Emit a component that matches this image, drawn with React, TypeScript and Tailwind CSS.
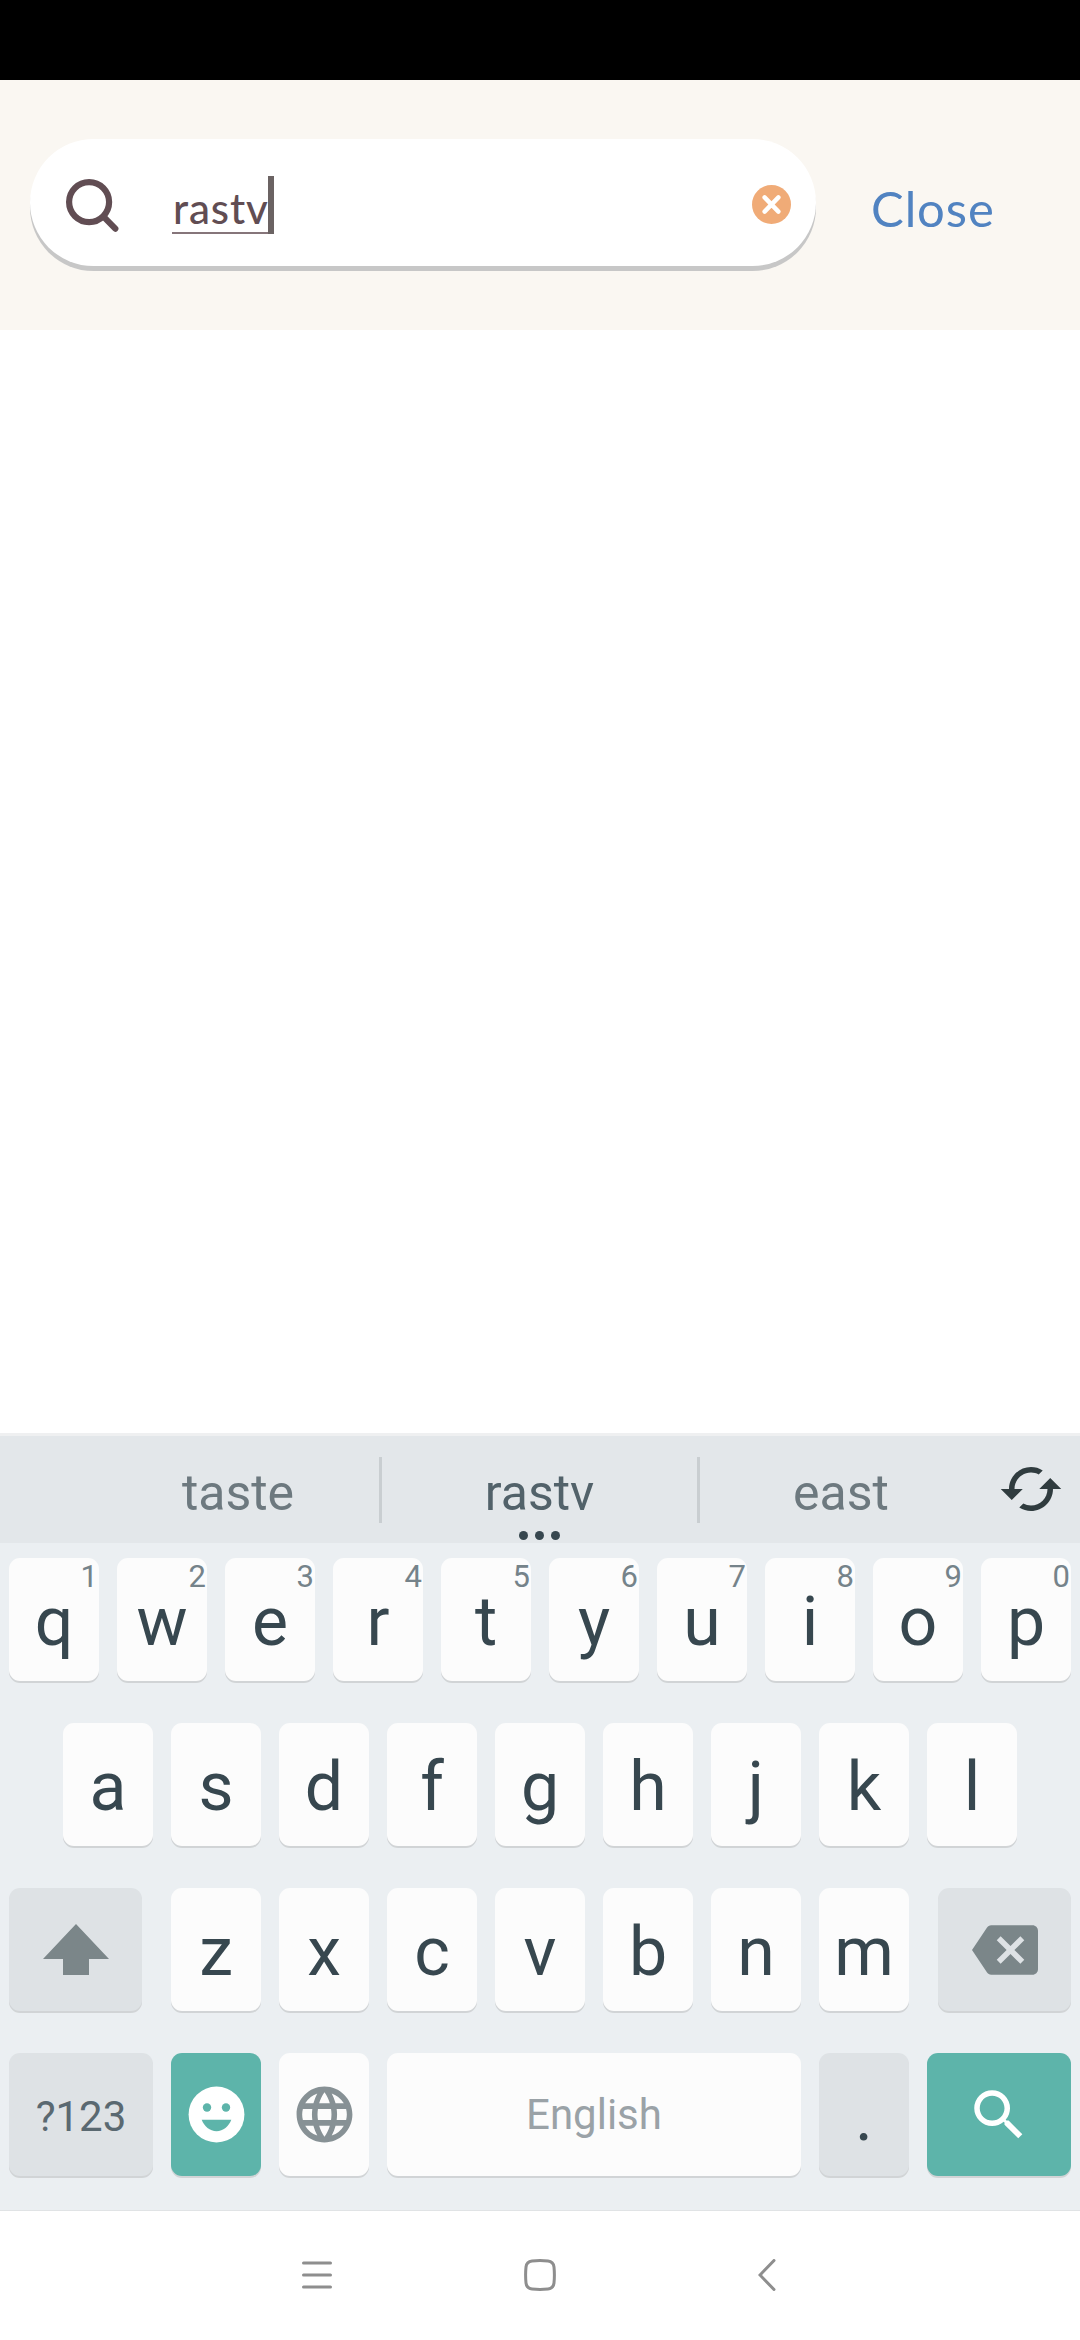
import type { ReactNode } from "react";
import { MdBackspace, MdCached, MdLanguage, MdSearch } from "react-icons/md";

const TOP_ROW = ["q", "w", "e", "r", "t", "y", "u", "i", "o", "p"];
const HOME_ROW = ["a", "s", "d", "f", "g", "h", "j", "k", "l"];
const BOTTOM_ROW = ["z", "x", "c", "v", "b", "n", "m"];

function Key({ children, className = "w-[90px] bg-[#fcfcfc]" }: { children: ReactNode; className?: string }) {
  return (
    <div
      className={`relative flex h-[123px] shrink-0 justify-center rounded-[11px] shadow-[0_2px_0_#d1d4d6] ${className}`}
    >
      {children}
    </div>
  );
}

function Letter({ children }: { children: string }) {
  return <span className="h-[123px] text-[68px] leading-[128px] text-[#37474f]">{children}</span>;
}

function SearchHeader() {
  return (
    <header className="flex h-[250px] items-start bg-[#faf7f2] pl-[30px] pt-[59px]">
      <div className="flex h-[127px] w-[786px] items-start rounded-full bg-white shadow-[0_5px_0_#c7c7c7]">
        <svg className="ml-[34px] mt-[37px] h-[60px] w-[60px] shrink-0" viewBox="0 0 60 60" fill="none" stroke="#614d53">
          <circle cx="25.1" cy="26.1" r="20" strokeWidth="6.2" />
          <path d="M40 41.2 51.3 52.7" strokeWidth="6.2" strokeLinecap="round" />
        </svg>
        <div className="ml-[48px] mt-[37px] flex h-[58px] items-end">
          <span className="h-[58px] w-[96px] whitespace-nowrap border-b-2 border-[#86757a] pl-[1px] font-['Lato',sans-serif] text-[42px] font-medium leading-[65px] tracking-[0.9px] text-[#614d53]">
            rastv
          </span>
          <span className="h-[58px] w-[6px] shrink-0 bg-[#6b6363]" />
        </div>
        <svg className="ml-auto mr-[25px] mt-[46px] h-[39px] w-[39px] shrink-0" viewBox="0 0 39 39">
          <circle cx="19.5" cy="19.5" r="19.5" fill="#f0ab77" />
          <path d="m12.6 12.4 13.8 14.2m0-14.2L12.6 26.6" stroke="#fff" strokeWidth="4.4" strokeLinecap="round" />
        </svg>
      </div>
      <span className="ml-[55px] mt-[34px] font-['Lato',sans-serif] text-[49px] leading-[70px] tracking-[0.9px] text-[#5183c1]">
        Close
      </span>
    </header>
  );
}

function SuggestionBar() {
  return (
    <div className="flex h-[110px] items-start border-t-[3px] border-[#eff0f1] bg-[#e3e7ea] pl-[97px] text-center text-[50px] leading-[114px] text-[#6d797f]">
      <span className="h-[107px] w-[282px]">taste</span>
      <span className="mt-[21px] h-[66px] w-[3px] bg-[#c9ced1]" />
      <span className="relative h-[107px] w-[315px] text-[#52626a]">
        rastv
        <span className="absolute bottom-[3px] left-[137px] flex gap-[7px]">
          <i className="h-[9px] w-[9px] rounded-full bg-[#37474f]" />
          <i className="h-[9px] w-[9px] rounded-full bg-[#37474f]" />
          <i className="h-[9px] w-[9px] rounded-full bg-[#37474f]" />
        </span>
      </span>
      <span className="mt-[21px] h-[66px] w-[3px] bg-[#c9ced1]" />
      <span className="h-[107px] w-[282px]">east</span>
      <MdCached className="ml-[16px] mt-[20px] h-[66px] w-[66px] text-[#303c3f]" />
    </div>
  );
}

function Keyboard() {
  return (
    <section className="h-[777px] bg-[#ebeff2] font-['Roboto',sans-serif]">
      <SuggestionBar />
      <div className="flex flex-col gap-[42px] px-[9px] pt-[15px]">
        <div className="flex gap-[18px]">
          {TOP_ROW.map((letter, i) => (
            <Key key={letter}>
              <Letter>{letter}</Letter>
              <span className="absolute right-[1px] top-0 text-[31px] leading-[37px] text-[#75838a]">{(i + 1) % 10}</span>
            </Key>
          ))}
        </div>
        <div className="flex justify-center gap-[18px]">
          {HOME_ROW.map((letter) => (
            <Key key={letter}>
              <Letter>{letter}</Letter>
            </Key>
          ))}
        </div>
        <div className="flex justify-between">
          <Key className="w-[133px] items-center bg-[#dee2e5]">
            <svg className="h-[51px] w-[66px]" viewBox="0 0 66 51" fill="#7b8689">
              <path d="M33 0 66 35H46V51H20V35H0Z" />
            </svg>
          </Key>
          <div className="flex gap-[18px]">
            {BOTTOM_ROW.map((letter) => (
              <Key key={letter}>
                <Letter>{letter}</Letter>
              </Key>
            ))}
          </div>
          <Key className="w-[133px] items-center bg-[#dee2e5]">
            <MdBackspace className="h-[66px] w-[66px] text-[#7b8689]" />
          </Key>
        </div>
        <div className="flex gap-[18px]">
          <Key className="w-[144px] bg-[#dee2e5]">
            <span className="h-[123px] text-[42px] leading-[127px] text-[#5a6971]">?123</span>
          </Key>
          <Key className="w-[90px] items-center bg-[#5db4aa]">
            <svg className="h-[67px] w-[67px]" viewBox="0 0 24 24">
              <circle cx="12" cy="12" r="10" fill="#fff" />
              <g fill="#5db4aa">
                <circle cx="8.6" cy="9.5" r="1.5" />
                <circle cx="15.4" cy="9.5" r="1.5" />
                <path d="M6.7 13.9h10.6c-.9 2.4-2.9 4.1-5.3 4.1s-4.4-1.7-5.3-4.1z" />
              </g>
            </svg>
          </Key>
          <Key className="w-[90px] items-center bg-[#fcfcfc]">
            <MdLanguage className="h-[67px] w-[67px] text-[#879195]" />
          </Key>
          <Key className="w-[414px] bg-[#fcfcfc]">
            <span className="h-[123px] text-[42px] leading-[123px] text-[#9aa2a7]">English</span>
          </Key>
          <Key className="w-[90px] bg-[#dee2e5]">
            <Letter>.</Letter>
          </Key>
          <Key className="w-[144px] items-center bg-[#5db4aa]">
            <MdSearch className="h-[66px] w-[66px] text-white" />
          </Key>
        </div>
      </div>
    </section>
  );
}

function NavigationBar() {
  return (
    <nav className="flex h-[130px] items-start border-t border-[#e0e3e5] bg-white pl-[302px] pt-[48px]">
      <svg className="h-[32px] w-[30px]" viewBox="0 0 30 32" stroke="#8e8e8e" strokeWidth="3" strokeLinecap="round">
        <path d="M1.5 4h27M1.5 16h27M1.5 28h27" />
      </svg>
      <svg className="ml-[192px] h-[32px] w-[32px]" viewBox="0 0 32 32" fill="none" stroke="#8e8e8e" strokeWidth="3">
        <path d="M8 2Q16 1.2 24 2 29.4 2.6 30 8 30.8 16 30 24 29.4 29.4 24 30 16 30.8 8 30 2.6 29.4 2 24 1.2 16 2 8 2.6 2.6 8 2Z" />
      </svg>
      <svg
        className="ml-[202px] h-[32px] w-[18px]"
        viewBox="0 0 18 32"
        fill="none"
        stroke="#8e8e8e"
        strokeWidth="3"
        strokeLinecap="round"
      >
        <path d="M16 1.5 2 16 16 30.5" />
      </svg>
    </nav>
  );
}

export default function App() {
  return (
    <div className="flex h-[2340px] w-[1080px] flex-col overflow-hidden bg-white">
      <div className="h-[80px] bg-black" />
      <SearchHeader />
      <main className="flex-1" />
      <Keyboard />
      <NavigationBar />
    </div>
  );
}
